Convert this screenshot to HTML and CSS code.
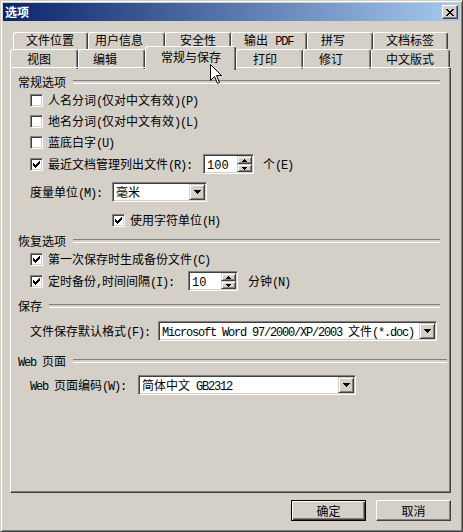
FILE: index.html
```html
<!DOCTYPE html>
<html lang="zh-CN">
<head>
<meta charset="utf-8">
<title>选项</title>
<link rel="stylesheet" href="styles.css">
</head>
<body>
<div class="window">
  <div class="titlebar">
    <span class="title">选项</span>
    <button class="close" aria-label="关闭">
      <svg width="8" height="7" viewBox="0 0 8 7" shape-rendering="crispEdges"><path d="M0 0h2v1H0zM6 0h2v1H6zM1 1h2v1H1zM5 1h2v1H5zM2 2h4v1H2zM3 3h2v1H3zM2 4h4v1H2zM1 5h2v1H1zM5 5h2v1H5zM0 6h2v1H0zM6 6h2v1H6z"/></svg>
    </button>
  </div>

  <div class="client">
    <div class="tabstrip">
      <div class="tab-row back">
        <div class="tab">文件位置</div>
        <div class="tab ind-6">用户信息</div>
        <div class="tab ind-14">安全性</div>
        <div class="tab">输出 <span class="en">PDF</span></div>
        <div class="tab ind-13">拼写</div>
        <div class="tab">文档标签</div>
      </div>
      <div class="tab-row front">
        <div class="tab ind-16">视图</div>
        <div class="tab ind-14">编辑</div>
        <div class="tab ind-15 active">常规与保存</div>
        <div class="tab ind-16">打印</div>
        <div class="tab ind-15">修订</div>
        <div class="tab ind-14">中文版式</div>
      </div>
    </div>

    <div class="panel">
      <div class="group-head"><span class="head-text">常规选项</span></div>
      <div class="row">
        <span class="cb"></span><span class="lbl">人名分词<span class="en">(</span>仅对中文有效<span class="en">)(P)</span></span>
      </div>
      <div class="row">
        <span class="cb"></span><span class="lbl">地名分词<span class="en">(</span>仅对中文有效<span class="en">)(L)</span></span>
      </div>
      <div class="row">
        <span class="cb"></span><span class="lbl">蓝底白字<span class="en">(U)</span></span>
      </div>
      <div class="row tall">
        <span class="cb"><svg class="tick" width="7" height="7" viewBox="0 0 7 7" shape-rendering="crispEdges"><path d="M0 2h1v3H0zM1 3h1v3H1zM2 4h1v3H2zM3 3h1v3H3zM4 2h1v3H4zM5 1h1v3H5zM6 0h1v3H6z"/></svg></span>
        <span class="lbl w-recent">最近文档管理列出文件<span class="en">(R):</span></span>
        <div class="spin w-51">
          <span class="field-value">100</span>
          <span class="spin-btns">
            <span class="spin-btn"><svg width="5" height="3" viewBox="0 0 5 3" shape-rendering="crispEdges"><path d="M2 0h1v1h1v1h1v1H0V2h1V1h1z"/></svg></span>
            <span class="spin-btn"><svg width="5" height="3" viewBox="0 0 5 3" shape-rendering="crispEdges"><path d="M0 0h5v1H4v1H3v1H2V2H1V1H0z"/></svg></span>
          </span>
        </div>
        <span class="unit">个<span class="en">(E)</span></span>
      </div>
      <div class="row tall mt6">
        <span class="lbl-plain w-82">度量单位<span class="en">(M):</span></span>
        <div class="select w-95">
          <span class="field-value">毫米</span>
          <span class="drop-btn"><svg width="7" height="4" viewBox="0 0 7 4" shape-rendering="crispEdges"><path d="M0 0h7v1H6v1H5v1H4v1H3V3H2V2H1V1H0z"/></svg></span>
        </div>
      </div>
      <div class="row sub mt7">
        <span class="cb"><svg class="tick" width="7" height="7" viewBox="0 0 7 7" shape-rendering="crispEdges"><path d="M0 2h1v3H0zM1 3h1v3H1zM2 4h1v3H2zM3 3h1v3H3zM4 2h1v3H4zM5 1h1v3H5zM6 0h1v3H6z"/></svg></span>
        <span class="lbl">使用字符单位<span class="en">(H)</span></span>
      </div>

      <div class="group-head mt2"><span class="head-text">恢复选项</span></div>
      <div class="row">
        <span class="cb"><svg class="tick" width="7" height="7" viewBox="0 0 7 7" shape-rendering="crispEdges"><path d="M0 2h1v3H0zM1 3h1v3H1zM2 4h1v3H2zM3 3h1v3H3zM4 2h1v3H4zM5 1h1v3H5zM6 0h1v3H6z"/></svg></span>
        <span class="lbl">第一次保存时生成备份文件<span class="en">(C)</span></span>
      </div>
      <div class="row tall">
        <span class="cb"><svg class="tick" width="7" height="7" viewBox="0 0 7 7" shape-rendering="crispEdges"><path d="M0 2h1v3H0zM1 3h1v3H1zM2 4h1v3H2zM3 3h1v3H3zM4 2h1v3H4zM5 1h1v3H5zM6 0h1v3H6z"/></svg></span>
        <span class="lbl w-140">定时备份<span class="en">,</span>时间间隔<span class="en">(I):</span></span>
        <div class="spin w-50">
          <span class="field-value">10</span>
          <span class="spin-btns">
            <span class="spin-btn"><svg width="5" height="3" viewBox="0 0 5 3" shape-rendering="crispEdges"><path d="M2 0h1v1h1v1h1v1H0V2h1V1h1z"/></svg></span>
            <span class="spin-btn"><svg width="5" height="3" viewBox="0 0 5 3" shape-rendering="crispEdges"><path d="M0 0h5v1H4v1H3v1H2V2H1V1H0z"/></svg></span>
          </span>
        </div>
        <span class="unit wide-gap">分钟<span class="en">(N)</span></span>
      </div>

      <div class="group-head mt6"><span class="head-text">保存</span></div>
      <div class="row tall mt6">
        <span class="lbl-plain w-128">文件保存默认格式<span class="en">(F):</span></span>
        <div class="select w-279">
          <span class="field-value"><span class="en">Microsoft Word 97/2000/XP/2003 </span>文件<span class="en">(*.doc)</span></span>
          <span class="drop-btn"><svg width="7" height="4" viewBox="0 0 7 4" shape-rendering="crispEdges"><path d="M0 0h7v1H6v1H5v1H4v1H3V3H2V2H1V1H0z"/></svg></span>
        </div>
      </div>

      <div class="group-head long mt11"><span class="head-text"><span class="en">Web </span>页面</span></div>
      <div class="row tall mt5">
        <span class="lbl-plain w-108"><span class="en">Web </span>页面编码<span class="en">(W):</span></span>
        <div class="select w-218">
          <span class="field-value">简体中文<span class="en"> GB2312</span></span>
          <span class="drop-btn"><svg width="7" height="4" viewBox="0 0 7 4" shape-rendering="crispEdges"><path d="M0 0h7v1H6v1H5v1H4v1H3V3H2V2H1V1H0z"/></svg></span>
        </div>
      </div>
    </div>

    <div class="actions">
      <button class="btn default">确定</button>
      <button class="btn">取消</button>
    </div>
  </div>

  <svg class="cursor" width="12" height="20" viewBox="0 0 12 20"><path d="M0.5 0.5V16.5L4.5 12.5L7.5 19.5L9.5 18.5L6.5 11.5H11.5Z" fill="#fff" stroke="#000" stroke-width="1" stroke-linejoin="miter"/></svg>
</div>
</body>
</html>
```

FILE: styles.css
```css
* { box-sizing: border-box; }

html, body {
  margin: 0;
  padding: 0;
}

body {
  background: #d4d0c8;
  color: #000;
  font-family: "Liberation Mono", "Noto Sans CJK SC", monospace;
  font-size: 12px;
  line-height: 16px;
}

button {
  font: inherit;
  color: inherit;
  margin: 0;
  padding: 0;
}

/* half-width Latin runs: 6px cells like the system bitmap font */
.en {
  letter-spacing: -1.2px;
}

/* window frame: classic 3D edge */
.window {
  position: relative;
  width: 463px;
  height: 532px;
  display: flex;
  flex-direction: column;
  padding: 2px;
  border: 1px solid;
  border-color: #d4d0c8 #404040 #404040 #d4d0c8;
  box-shadow: inset 1px 1px #fff, inset -1px -1px #808080;
  background: #d4d0c8;
}

.titlebar {
  flex: none;
  height: 18px;
  display: flex;
  align-items: center;
  padding: 0 2px;
  background: linear-gradient(to right, #0a246a, #a6caf0);
}

.title {
  color: #fff;
  font-weight: bold;
  font-family: "Noto Sans CJK SC", sans-serif;
}

.close {
  margin-left: auto;
  width: 16px;
  height: 14px;
  display: flex;
  align-items: center;
  justify-content: center;
  background: #d4d0c8;
  border: 1px solid;
  border-color: #fff #404040 #404040 #fff;
  box-shadow: inset -1px -1px #808080;
}

.client {
  flex: 1;
  display: flex;
  flex-direction: column;
  padding: 11px 9px 0 7px;
}

/* tab strip */
.tab-row {
  display: grid;
}

.tab-row.back {
  height: 17px;
  margin-left: 3px;
  grid-template-columns: 75px 77px 66px 76px 66px 75px;
}

.tab-row.front {
  height: 18px;
  grid-template-columns: 68px 67px 91px 67px 68px 79px;
}

.tab {
  display: flex;
  align-items: center;
  padding: 3px 0 0 12px;
  white-space: pre;
  background: #d4d0c8;
  border-top: 1px solid #fff;
  border-left: 1px solid #fff;
  border-right: 1px solid #404040;
  box-shadow: inset -1px 0 #808080;
  border-radius: 3px 3px 0 0;
}

.back .tab { padding-top: 1px; }

.tab.ind-6 { padding-left: 6px; }
.tab.ind-13 { padding-left: 13px; }
.tab.ind-14 { padding-left: 14px; }
.tab.ind-15 { padding-left: 15px; }
.tab.ind-16 { padding-left: 16px; }

.tab.active {
  position: relative;
  z-index: 1;
  margin: -3px 0 -1px;
  padding-top: 1px;
}

/* page body of the tab control */
.panel {
  flex: none;
  height: 426px;
  padding: 6px 10px 0 7px;
  border: 1px solid;
  border-color: #fff #404040 #404040 #fff;
  box-shadow: inset -1px -1px #808080;
}

.group-head {
  height: 16px;
  display: flex;
  align-items: center;
  white-space: pre;
}

.head-text { padding-top: 3px; }

.group-head::after {
  content: "";
  flex: 1;
  height: 2px;
  margin-left: 7px;
  border-top: 1px solid #808080;
  border-bottom: 1px solid #fff;
}

.group-head.long::after { margin-right: -7px; }

.row {
  height: 21px;
  display: flex;
  align-items: center;
  padding-left: 12px;
  white-space: pre;
}

.row.tall { height: 22px; }
.row.sub { padding-left: 94px; }

.mt2 { margin-top: 2px; }
.mt5 { margin-top: 5px; }
.mt6 { margin-top: 6px; }
.mt7 { margin-top: 7px; }
.mt11 { margin-top: 11px; }

/* checkbox */
.cb {
  flex: none;
  width: 13px;
  height: 13px;
  display: flex;
  align-items: center;
  justify-content: center;
  background: #fff;
  border: 1px solid;
  border-color: #808080 #fff #fff #808080;
  box-shadow: inset 1px 1px #404040, inset -1px -1px #d4d0c8;
}

.lbl,
.lbl-plain,
.unit {
  padding-top: 3px;
}

.lbl { margin-left: 5px; }
.lbl-plain { flex: none; }

.w-recent { width: 155px; flex: none; }
.w-140 { width: 140px; flex: none; }
.w-82 { width: 82px; }
.w-108 { width: 108px; }
.w-128 { width: 128px; }

.unit { margin-left: 9px; }
.unit.wide-gap { margin-left: 10px; }

/* sunken edit fields */
.spin,
.select {
  flex: none;
  height: 20px;
  display: flex;
  background: #fff;
  border: 1px solid;
  border-color: #808080 #fff #fff #808080;
  box-shadow: inset 1px 1px #404040, inset -1px -1px #d4d0c8;
  padding: 1px;
}

.w-50 { width: 50px; }
.w-51 { width: 51px; }
.w-95 { width: 95px; }
.w-218 { width: 218px; }
.w-279 { width: 279px; }

.field-value {
  flex: 1;
  min-width: 0;
  overflow: hidden;
  padding: 3px 0 0 2px;
  display: flex;
  align-items: center;
  white-space: pre;
}

.spin-btns {
  flex: none;
  width: 15px;
  display: flex;
  flex-direction: column;
}

.spin-btn,
.drop-btn {
  display: flex;
  align-items: center;
  justify-content: center;
  background: #d4d0c8;
  border: 1px solid;
  border-color: #d4d0c8 #404040 #404040 #d4d0c8;
  box-shadow: inset 1px 1px #fff, inset -1px -1px #808080;
}

.spin-btn { flex: 1; }

.drop-btn {
  flex: none;
  width: 16px;
}

/* dialog buttons */
.actions {
  display: flex;
  justify-content: flex-end;
  gap: 10px;
  margin-top: 7px;
}

.btn {
  width: 75px;
  height: 21px;
  background: #d4d0c8;
  border: 1px solid;
  border-color: #fff #404040 #404040 #fff;
  box-shadow: inset -1px -1px #808080;
  font-family: "Noto Sans CJK SC", sans-serif;
}

.btn.default {
  border-color: #000;
  box-shadow: inset 1px 1px #fff, inset -1px -1px #404040, inset -2px -2px #808080;
}

/* mouse pointer resting over the tab strip */
.cursor {
  position: absolute;
  left: 209px;
  top: 63px;
  z-index: 5;
}
```
